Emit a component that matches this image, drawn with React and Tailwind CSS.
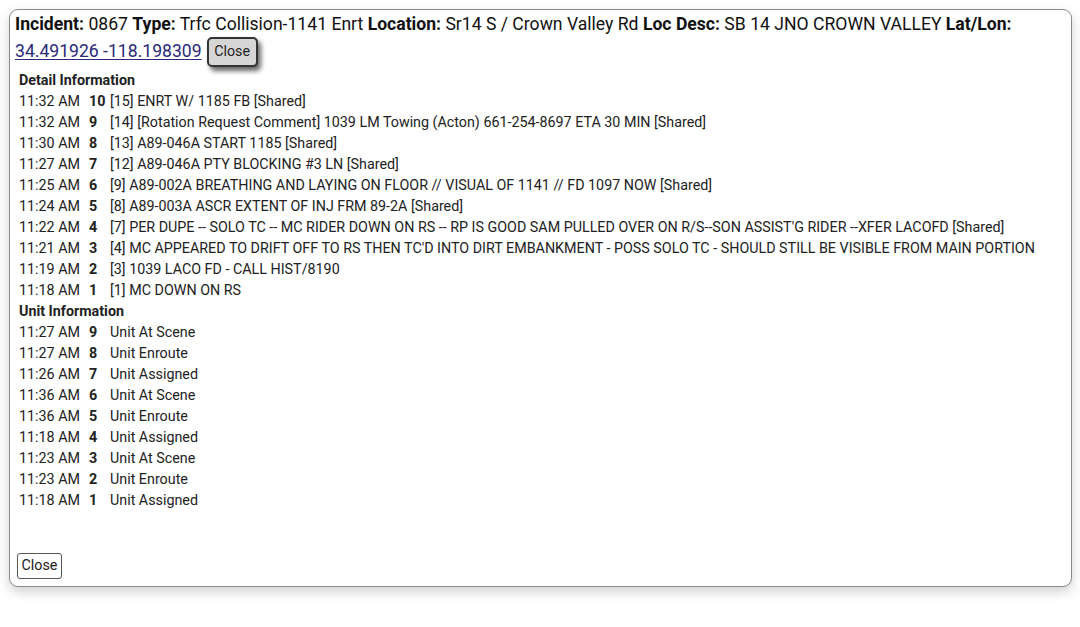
import React from "react";

const details = [
  ["11:32 AM", "10", "[15] ENRT W/ 1185 FB [Shared]"],
  ["11:32 AM", "9", "[14] [Rotation Request Comment] 1039 LM Towing (Acton) 661-254-8697 ETA 30 MIN [Shared]"],
  ["11:30 AM", "8", "[13] A89-046A START 1185 [Shared]"],
  ["11:27 AM", "7", "[12] A89-046A PTY BLOCKING #3 LN [Shared]"],
  ["11:25 AM", "6", "[9] A89-002A BREATHING AND LAYING ON FLOOR // VISUAL OF 1141 // FD 1097 NOW [Shared]"],
  ["11:24 AM", "5", "[8] A89-003A ASCR EXTENT OF INJ FRM 89-2A [Shared]"],
  ["11:22 AM", "4", "[7] PER DUPE -- SOLO TC -- MC RIDER DOWN ON RS -- RP IS GOOD SAM PULLED OVER ON R/S--SON ASSIST'G RIDER --XFER LACOFD [Shared]"],
  ["11:21 AM", "3", "[4] MC APPEARED TO DRIFT OFF TO RS THEN TC'D INTO DIRT EMBANKMENT - POSS SOLO TC - SHOULD STILL BE VISIBLE FROM MAIN PORTION"],
  ["11:19 AM", "2", "[3] 1039 LACO FD - CALL HIST/8190"],
  ["11:18 AM", "1", "[1] MC DOWN ON RS"],
];

const units = [
  ["11:27 AM", "9", "Unit At Scene"],
  ["11:27 AM", "8", "Unit Enroute"],
  ["11:26 AM", "7", "Unit Assigned"],
  ["11:36 AM", "6", "Unit At Scene"],
  ["11:36 AM", "5", "Unit Enroute"],
  ["11:18 AM", "4", "Unit Assigned"],
  ["11:23 AM", "3", "Unit At Scene"],
  ["11:23 AM", "2", "Unit Enroute"],
  ["11:18 AM", "1", "Unit Assigned"],
];

function Row({ r }) {
  return (
    <div className="flex h-[21px] items-center whitespace-nowrap">
      <span className="w-[70px] shrink-0">{r[0]}</span>
      <span className="w-[21px] shrink-0 font-bold">{r[1]}</span>
      <span>{r[2]}</span>
    </div>
  );
}

export default function App() {
  return (
    <div className="w-[1080px] h-[627px] bg-white pt-[9px] pl-[9px] font-['Roboto',sans-serif] text-[#222]">
      <div className="w-[1063px] h-[578px] flex flex-col border-[1.5px] border-[#8a8a8a] rounded-[9px] shadow-[0_5px_12px_rgba(0,0,0,0.18)] bg-white px-[5px] pt-[2px] pb-[6px]">
        <div className="text-[17.6px] leading-[24px] text-[#111] whitespace-nowrap">
          <b>Incident:</b> 0867 <b>Type:</b> Trfc Collision-1141 Enrt <b>Location:</b> Sr14 S / Crown Valley Rd <b>Loc Desc:</b> SB 14 JNO CROWN VALLEY <b>Lat/Lon:</b>
        </div>
        <div className="flex items-center h-[31px] text-[17.6px]">
          <span className="underline text-[#2a2a78] decoration-1 underline-offset-2">34.491926 -118.198309</span>
          <button className="ml-[5px] w-[51px] h-[30px] border-2 border-[#333] rounded-[5px] bg-[#d6d6d6] text-[14.3px] text-[#222] shadow-[3px_4px_5px_rgba(0,0,0,0.6)]">
            Close
          </button>
        </div>
        <div className="pl-[4px] pt-[3px] text-[14.3px] text-[#222]">
          <div className="h-[21px] flex items-center font-bold">Detail Information</div>
          {details.map((r, i) => (
            <Row key={i} r={r} />
          ))}
          <div className="h-[21px] flex items-center font-bold">Unit Information</div>
          {units.map((r, i) => (
            <Row key={i} r={r} />
          ))}
        </div>
        <div className="mt-auto pl-[2px] pb-[1px]">
          <button className="h-[26px] w-[45px] border border-[#555] rounded-[3px] bg-white text-[14.3px] text-[#222]">
            Close
          </button>
        </div>
      </div>
    </div>
  );
}
